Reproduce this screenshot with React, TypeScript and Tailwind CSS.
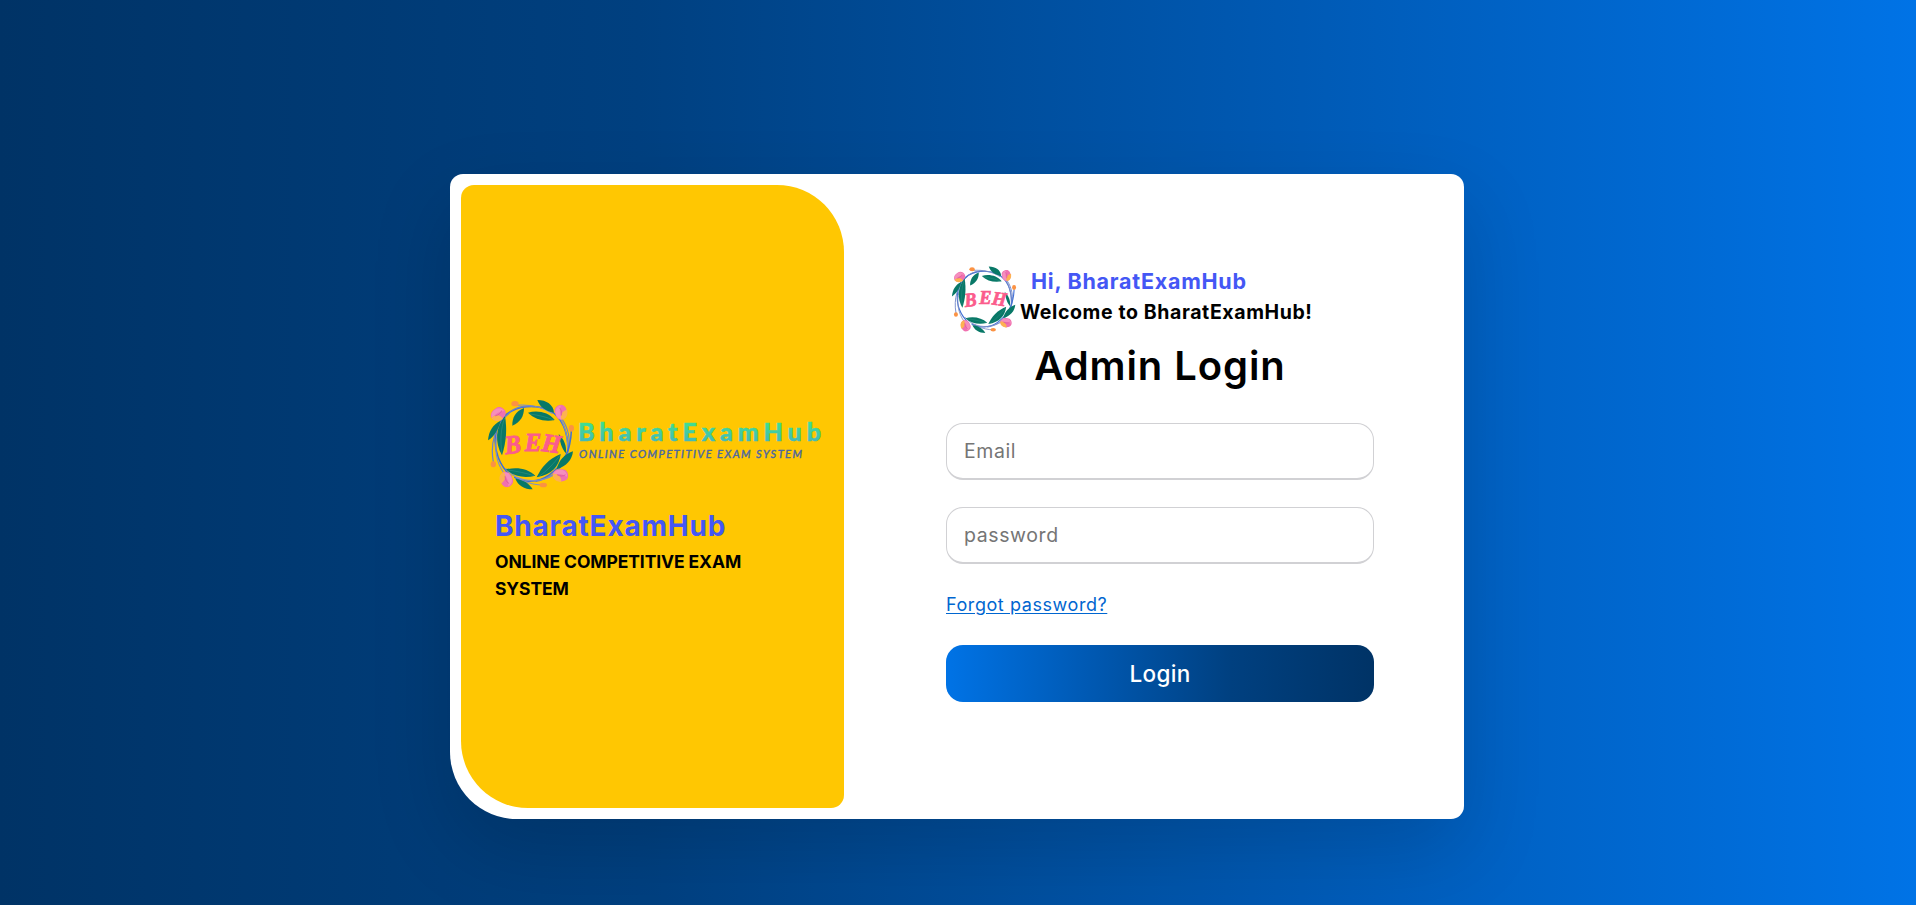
function Flower({ transform }: { transform: string }) {
  return (
    <g transform={transform}>
      <path d="M-17 2C-22 -10 -12 -20 -1 -21C8 -22 16 -12 17 0C18 13 10 22 0 22C-10 20 -15 12 -17 2Z" fill="#f071b0" />
      <path d="M-15 4C-18 -8 -10 -17 -2 -18C-6 -8 -3 8 5 20C-6 21 -13 14 -15 4Z" fill="#f58fbd" />
      <path d="M17 -8C21 6 17 18 4 22C-3 12 2 -4 17 -8Z" fill="#fdb252" />
      <path d="M-6 -12C0 -8 3 0 2 10" fill="none" stroke="#d9559c" strokeWidth="2" />
    </g>
  );
}

function Wreath({ className, letterClass }: { className: string; letterClass: string }) {
  return (
    <svg viewBox="0 0 330 330" className={className} aria-hidden="true">
      <g fill="none" strokeLinecap="round">
        <path d="M78 74C110 48 165 40 210 62C246 82 264 126 264 178" stroke="#3f6fd6" strokeWidth="4.5" />
        <path d="M106 46C150 42 188 52 216 70M236 78C258 110 266 146 262 196" stroke="#7f8fc4" strokeWidth="3.5" />
        <path d="M244 84C268 118 272 156 263 190C250 236 212 266 168 274" stroke="#6c82c8" strokeWidth="3.5" />
        <path d="M274 124C272 178 250 226 206 256C176 276 134 280 104 262" stroke="#3f6fd6" strokeWidth="4.5" />
        <path d="M190 285C146 284 106 266 78 236M222 254C190 274 144 278 112 262" stroke="#7f8fc4" strokeWidth="3.5" />
        <path d="M92 258C58 226 42 182 46 140C50 110 62 86 86 70" stroke="#3f6fd6" strokeWidth="4.5" />
        <path d="M40 216C30 162 44 104 92 64C112 50 136 46 164 50" stroke="#6c82c8" strokeWidth="3.5" />
        <path d="M72 250C48 216 42 176 52 132" stroke="#7f8fc4" strokeWidth="3.5" />
      </g>
      <g fill="#087867">
        <path d="M144 68C172 60 206 66 224 90C194 96 164 88 144 68Z" />
        <path d="M172 30C200 30 220 44 222 68C198 64 180 52 172 30Z" />
        <path d="M132 54C132 78 122 96 97 107C96 84 106 64 132 54Z" />
        <path d="M75 78C82 120 78 158 66 196C44 158 46 112 75 78Z" />
        <path d="M62 92C56 116 44 138 24 151C26 124 38 104 62 92Z" />
        <path d="M78 238C112 230 144 236 166 257C134 266 102 260 78 238Z" />
        <path d="M106 266C132 270 148 280 158 298C132 298 114 286 106 266Z" />
        <path d="M242 192C238 228 216 254 170 262C184 232 206 206 242 192Z" />
        <path d="M279 184C276 210 260 228 230 238C236 212 252 194 279 184Z" />
        <path d="M236 132C252 148 260 166 258 190C244 176 240 154 236 132Z" />
      </g>
      <path d="M150 72C178 76 202 82 222 90M74 84C62 116 60 154 66 190M84 240C112 244 140 250 162 257M176 260C200 244 222 220 240 196" fill="none" stroke="#3c9688" strokeWidth="1.5" />
      <g fill="#fb9243">
        <ellipse cx="105" cy="41" rx="11" ry="8" />
        <ellipse cx="274" cy="115" rx="8" ry="10" />
        <ellipse cx="40" cy="223" rx="8" ry="9" />
        <ellipse cx="190" cy="285" rx="11" ry="7" />
      </g>
      <Flower transform="translate(55 72) rotate(70) scale(1.08)" />
      <Flower transform="translate(243 66) rotate(5) scale(1.05)" />
      <Flower transform="translate(242 256) rotate(110) scale(1.08)" />
      <Flower transform="translate(79 269) rotate(170) scale(1.08)" />
      <g className={letterClass} fontSize="79" fontStyle="italic" fontWeight="700" fill="#fb5c8c" stroke="#fb5c8c" strokeWidth="3">
        <text transform="translate(77 193) rotate(-7) scale(0.92 1)">B</text>
        <text transform="translate(134 182) scale(0.94 0.98)">E</text>
        <text transform="translate(183 182) rotate(8) scale(0.92 0.98)">H</text>
      </g>
    </svg>
  );
}

function BrandBanner() {
  return (
    <div className="flex h-[110px] items-start">
      <Wreath className="size-[110px] shrink-0" letterClass="font-['Liberation_Serif',serif]" />
      <svg viewBox="0 0 252 60" className="-ml-[12px] mt-[20px] h-[60px] w-[252px] shrink-0">
        <defs>
          <linearGradient id="brandInk" x1="0" y1="0" x2="0" y2="1">
            <stop offset="0.2" stopColor="#3fe08e" />
            <stop offset="0.85" stopColor="#44b9b9" />
          </linearGradient>
        </defs>
        <text x="0" y="31" textLength="243" className="font-[Lato,sans-serif]" fontSize="25" fontWeight="900" fill="url(#brandInk)" stroke="url(#brandInk)" strokeWidth="0.5">
          BharatExamHub
        </text>
        <text x="1" y="48" textLength="223" className="font-[Lato,sans-serif]" fontSize="11" fontStyle="italic" fontWeight="400" fill="#4b67a3" stroke="#4b67a3" strokeWidth="0.4">
          ONLINE COMPETITIVE EXAM SYSTEM
        </text>
      </svg>
    </div>
  );
}

const field =
  "block h-[57px] w-full rounded-[17px] border border-b-2 border-[#d1d1d4] bg-white pr-4 pl-[17px] text-[19.5px] tracking-[0.6px] text-black outline-none placeholder:text-[#757575]";

export default function App() {
  return (
    <div className="flex h-[905px] items-start justify-center bg-[linear-gradient(to_right,#003366,#004080,#0059b3,#0073e6)] pt-[174px] pr-[2px] font-[Inter,sans-serif] text-black">
      <main className="flex h-[645px] w-[1014px] rounded-[13px] rounded-bl-[67px] bg-white p-[11px] shadow-[0_32px_80px_rgba(0,0,0,0.15)]">
        <section className="flex w-[383px] shrink-0 flex-col rounded-[13px] rounded-tr-[67px] rounded-bl-[67px] bg-[#ffc702] pt-[205px] pl-[19px]">
          <BrandBanner />
          <div className="pl-[15px]">
            <h2 className="mt-[6px] text-[28px] leading-[40px] font-bold tracking-[0.8px] whitespace-nowrap text-[#4457f5]">BharatExamHub</h2>
            <p className="mt-[2px] w-[290px] text-[17.5px] leading-[27px] font-bold tracking-[-0.1px]">
              ONLINE COMPETITIVE EXAM
              <br />
              SYSTEM
            </p>
          </div>
        </section>
        <section className="ml-[102px] w-[428px] pt-[73px]">
          <header className="flex h-[83px]">
            <Wreath className="mt-px size-[82px] shrink-0" letterClass="font-['Liberation_Serif',serif]" />
            <div className="-ml-[8px] pt-[7px] whitespace-nowrap">
              <p className="pl-[11px] text-[21.5px] leading-[32px] font-bold tracking-[0.75px] text-[#4457f5]">Hi, BharatExamHub</p>
              <p className="text-[19.5px] leading-[30px] font-bold tracking-[0.6px]">Welcome to BharatExamHub!</p>
            </div>
          </header>
          <h1 className="-mt-px text-center text-[40px] leading-[52px] font-semibold tracking-[0.9px]">Admin Login</h1>
          <form className="mt-[31px]">
            <input className={field} type="text" placeholder="Email" />
            <input className={`${field} mt-[27px]`} type="password" placeholder="password" />
            <a href="#" className="mt-[27px] block w-fit text-[18px] leading-[27px] tracking-[0.57px] whitespace-nowrap text-[#0066d0] underline underline-offset-[2px]">
              Forgot password?
            </a>
            <button type="button" className="mt-[27px] block h-[57px] w-full rounded-[17px] bg-[linear-gradient(to_right,#0073e6,#0059b3,#004080,#003366)] text-[22.5px] font-medium tracking-[0.3px] text-white">
              Login
            </button>
          </form>
        </section>
      </main>
    </div>
  );
}
